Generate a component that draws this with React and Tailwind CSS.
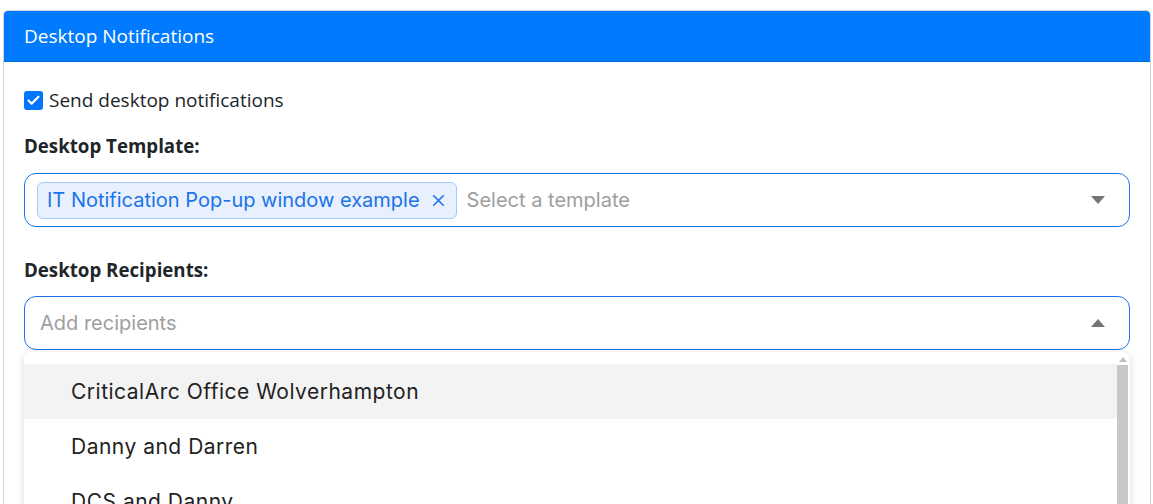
import { Check, X } from "lucide-react";

const sans = { fontFamily: "'Open Sans', 'Noto Sans', sans-serif" };
const ui = { fontFamily: "Inter, 'Noto Sans', sans-serif" };

function CheckBox() {
  return (
    <span className="flex h-[19px] w-[19px] items-center justify-center rounded-[3px] bg-[#0075ff]">
      <Check size={15} strokeWidth={3.5} className="text-white" />
    </span>
  );
}

function Caret({ up }) {
  return (
    <svg width="14" height="8" viewBox="0 0 14 8" className="text-[#757575]">
      {up ? (
        <polygon points="0,8 14,8 7,0" fill="currentColor" />
      ) : (
        <polygon points="0,0 14,0 7,8" fill="currentColor" />
      )}
    </svg>
  );
}

const recipients = [
  "CriticalArc Office Wolverhampton",
  "Danny and Darren",
  "DCS and Danny",
  "Emergency Team",
];

export default function App() {
  return (
    <div className="h-[504px] overflow-hidden bg-white pl-[3px] pt-[10px]">
      <div className="w-[1148px] rounded-t-[5px] border border-[#d3d3d3]" style={sans}>
        {/* Header */}
        <div className="flex h-[51px] items-center rounded-t-[4px] border-b border-[#0069d9] bg-[#007bff] px-[20px] text-[19px] text-white">
          Desktop Notifications
        </div>

        {/* Body */}
        <div className="px-[20px] pt-[25px] text-[#212529]">
          <label className="flex h-[27px] items-center gap-[6px] text-[19px]">
            <CheckBox />
            <span>Send desktop notifications</span>
          </label>

          <div className="mt-[18px] h-[27px] text-[18.7px] font-bold leading-[27px]">
            Desktop Template:
          </div>

          <div
            className="mt-[14px] flex h-[54px] w-[1106px] items-center rounded-[12px] border border-[#1a73e8] pl-[12px] pr-[24px]"
            style={ui}
          >
            <span className="flex h-[37px] items-center gap-[9px] rounded-[6px] border border-[#a8c7fa] bg-[#e8f0fe] pl-[9px] pr-[8px] text-[20px] text-[#1a73e8]">
              IT Notification Pop-up window example
              <X size={19} strokeWidth={2} />
            </span>
            <span className="ml-[10px] text-[20px] text-[#9e9e9e]">Select a template</span>
            <span className="ml-auto">
              <Caret />
            </span>
          </div>

          <div className="mt-[29px] h-[27px] text-[18.7px] font-bold leading-[27px]">
            Desktop Recipients:
          </div>

          <div
            className="mt-[13px] flex h-[54px] w-[1106px] items-center rounded-[12px] border border-[#1a73e8] pl-[15px] pr-[24px]"
            style={ui}
          >
            <span className="text-[20px] text-[#9e9e9e]">Add recipients</span>
            <span className="ml-auto">
              <Caret up />
            </span>
          </div>

          {/* Open dropdown list */}
          <div
            className="mt-[2px] flex h-[200px] w-[1106px] rounded-t-[8px] bg-white pt-[12px] shadow-[0_2px_8px_rgba(0,0,0,0.15)]"
            style={ui}
          >
            <ul className="flex-1">
              {recipients.map((name, i) => (
                <li
                  key={name}
                  className={
                    "flex h-[55px] items-center pl-[47px] text-[21px] tracking-[0.5px] text-[#222] " +
                    (i === 0 ? "bg-[#f3f3f3]" : "")
                  }
                >
                  {name}
                </li>
              ))}
            </ul>
            <div className="mr-[2px] flex w-[11px] flex-col items-center">
              <svg width="8" height="5" viewBox="0 0 8 5" className="-mt-[7px] mb-[3px] text-[#c1c1c1]">
                <polygon points="0,5 8,5 4,0" fill="currentColor" />
              </svg>
              <div className="w-full flex-1 bg-[#c8c8c8]" />
            </div>
          </div>
        </div>
      </div>
    </div>
  );
}
